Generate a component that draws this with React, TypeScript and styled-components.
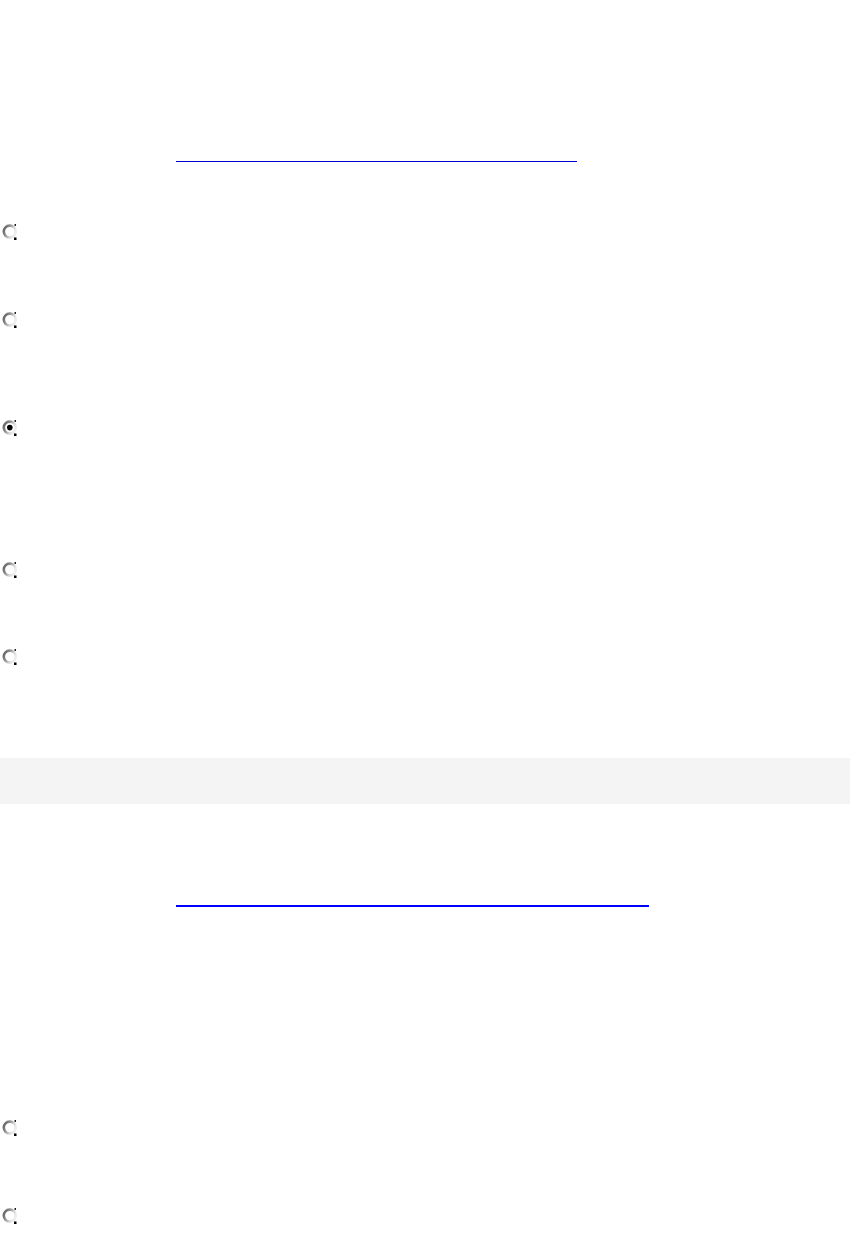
import styled, { createGlobalStyle } from 'styled-components';

const GlobalStyle = createGlobalStyle`
  html, body {
    margin: 0;
    padding: 0;
    background: #ffffff;
    font-family: "Liberation Sans", Arial, sans-serif;
  }
`;

const Page = styled.div`
  display: flex;
  flex-direction: column;
  width: 851px;
  min-height: 1258px;
`;

type GapProps = {
  $top: number;
};

const LinkRow = styled.div<GapProps>`
  display: flex;
  margin-top: ${({ $top }) => $top}px;
  padding-left: 176px;
`;

type LinkProps = {
  $width: number;
  $thick: number;
  $color: string;
};

const BlankLink = styled.a<LinkProps>`
  display: block;
  width: ${({ $width }) => $width}px;
  height: 0;
  border-bottom: ${({ $thick, $color }) => `${$thick}px solid ${$color}`};
`;

const RadioRow = styled.label<GapProps>`
  display: flex;
  align-items: center;
  height: 16px;
  margin-top: ${({ $top }) => $top}px;
  padding-left: 2px;
`;

const Band = styled.div<GapProps>`
  margin-top: ${({ $top }) => $top}px;
  width: 850px;
  height: 46px;
  background: #f4f4f4;
`;

function Radio({ checked = false }: { checked?: boolean }) {
  const id = checked ? 'rg-on' : 'rg-off';
  return (
    <svg width="16" height="17" viewBox="0 0 16 17">
      <defs>
        <linearGradient id={id} x1="0" y1="0" x2="1" y2="0.5">
          <stop offset="0" stopColor="#5a5a5a" />
          <stop offset="0.4" stopColor="#8c8c8c" />
          <stop offset="0.75" stopColor="#d6d6d6" />
          <stop offset="1" stopColor="#eeeeee" />
        </linearGradient>
      </defs>
      <circle cx="7.8" cy="8.6" r="6" fill="#ffffff" stroke={`url(#${id})`} strokeWidth="2.6" />
      <rect x="12.5" y="1" width="1.5" height="2" fill="#222" />
      <rect x="12" y="14.5" width="2.5" height="2.5" fill="#000" />
      {checked && <circle cx="7.8" cy="8.6" r="2.8" fill="#000" />}
    </svg>
  );
}

export default function App() {
  return (
    <>
      <GlobalStyle />
      <Page>
        <LinkRow $top={161}>
          <BlankLink href="#" $width={401} $thick={1} $color="#0000cc" />
        </LinkRow>
        <RadioRow $top={61}>
          <Radio />
        </RadioRow>
        <RadioRow $top={72}>
          <Radio />
        </RadioRow>
        <RadioRow $top={92}>
          <Radio checked />
        </RadioRow>
        <RadioRow $top={126}>
          <Radio />
        </RadioRow>
        <RadioRow $top={71}>
          <Radio />
        </RadioRow>
        <Band $top={94} />
        <LinkRow $top={101}>
          <BlankLink href="#" $width={473} $thick={2} $color="#0000ff" />
        </LinkRow>
        <RadioRow $top={212}>
          <Radio />
        </RadioRow>
        <RadioRow $top={72}>
          <Radio />
        </RadioRow>
      </Page>
    </>
  );
}
